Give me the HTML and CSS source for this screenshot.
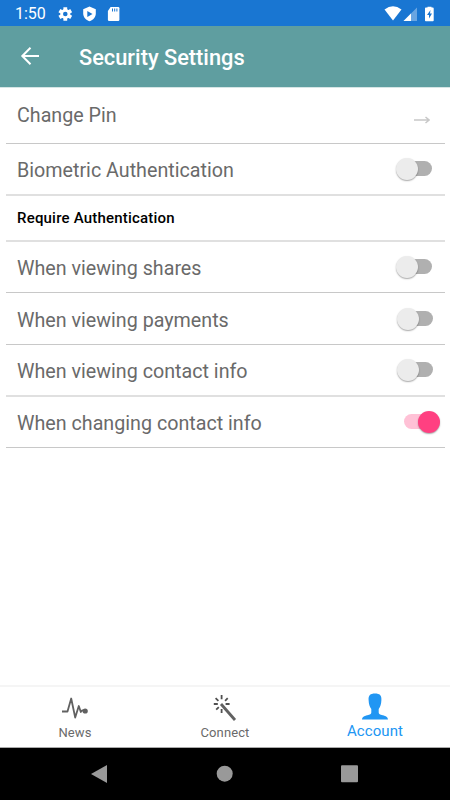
FILE: index.html
```
<!DOCTYPE html>
<html lang="en">
<head>
    <meta charset="UTF-8">
    <meta name="viewport" content="width=device-width, initial-scale=1.0">
    <title>Security Settings</title>
    <link rel="stylesheet" href="styles.css">
</head>
<body>
    <div class="status-bar">
        <span class="time">1:50</span>
        <svg class="status-left" width="64" height="16" viewBox="0 0 64 16">
            <g fill="#fff">
                <circle cx="7.3" cy="8" r="5"/>
                <g stroke="#fff" stroke-width="3.8">
                    <path d="M7.3 1.2v13.6M1.4 4.6l11.8 6.8M13.2 4.6L1.4 11.4"/>
                </g>
                <path d="M31.5 .6l6.3 2.6v4.3c0 3.7-2.6 6.4-6.3 7.7-3.7-1.3-6.3-4-6.3-7.7V3.2z"/>
                <path d="M53.6 1h7.6q1.2 0 1.2 1.2v11.6q0 1.2-1.2 1.2h-9.1q-1.2 0-1.2-1.2V5z" transform="translate(-1 0)"/>
            </g>
            <circle cx="7.3" cy="8" r="2.3" fill="#1976d2"/>
            <path d="M29.3 4.9l5.2 3-5.2 3z" fill="#1976d2"/>
            <path d="M54.5 2.5v3M56.7 2.5v3M58.9 2.5v3" stroke="#1976d2" stroke-width="1"/>
        </svg>
        <svg class="status-right" width="52" height="16" viewBox="0 0 52 16">
            <path d="M.5 3.5Q9-2.8 17.5 3.5L9 14.5z" fill="#fff"/>
            <path d="M33 1.5V15H19.5z" fill="#fff" opacity=".35"/>
            <path d="M27 7.5V15H19.5z" fill="#fff"/>
            <path d="M43.5 1.6V.8h4v.8h1.4q.8 0 .8.8v12q0 .8-.8.8h-7.1q-.8 0-.8-.8v-12q0-.8.8-.8z" fill="#fff"/>
            <path d="M46.5 4L43 9h2v3.5l3-5h-2z" fill="#1976d2"/>
        </svg>
    </div>

    <div class="header">
        <svg class="back" width="20" height="20" viewBox="0 0 20 20" fill="none" stroke="#fff" stroke-width="2">
            <path d="M19 10H2.5M10.5 1.8L2.3 10l8.2 8.2"/>
        </svg>
        <h1>Security Settings</h1>
    </div>

    <div class="settings">
        <div class="row pin">
            <span>Change Pin</span>
            <svg class="arrow" width="16" height="8" viewBox="0 0 16 8" fill="none" stroke="#c8c8c8" stroke-width="1.5">
                <path d="M0 4h15M11.5 1L15 4l-3.5 3"/>
            </svg>
        </div>
        <div class="row soft">
            <span>Biometric Authentication</span>
            <div class="switch"></div>
        </div>
        <div class="row soft section"><span>Require Authentication</span></div>
        <div class="row shares">
            <span>When viewing shares</span>
            <div class="switch"></div>
        </div>
        <div class="row">
            <span>When viewing payments</span>
            <div class="switch inset"></div>
        </div>
        <div class="row soft">
            <span>When viewing contact info</span>
            <div class="switch inset"></div>
        </div>
        <div class="row">
            <span>When changing contact info</span>
            <div class="switch on"></div>
        </div>
    </div>

    <div class="tabs">
        <div class="tab">
            <svg width="28" height="28" viewBox="0 0 28 28" fill="none" stroke="#616161" stroke-width="1.8" stroke-linejoin="round">
                <path d="M1 15.5h5.5l3.700-13 4 19L17.800 10l2 6 1.200-1.500h3"/>
                <circle cx="24.2" cy="15" r="2.6" fill="#616161" stroke="none"/>
            </svg>
            <span>News</span>
        </div>
        <div class="tab">
            <svg width="28" height="30" viewBox="0 0 28 30" fill="none" stroke="#505050">
                <path d="M10 10l14 16" stroke-width="2.8" stroke="#616161"/>
                <path d="M10.600 1v4.200M10.600 15v4M2.800 10h4M14.600 10h4M4.600 4.200l2.800 2.600M16.700 4.200l-2.600 2.600M5.200 15.700l2.600-2.600" stroke-width="1.8"/>
            </svg>
            <span>Connect</span>
        </div>
        <div class="tab active">
            <svg width="28" height="29" viewBox="0 0 28 29">
                <path d="M14 .6c4.800 0 6.700 2 6.400 6.500-.2 4.200-1 6.900-2.700 8.800v3.500c0 1.500 1.300 2 4 2.800 3.500 1 4.800 1.600 5.300 4.200H1c.5-2.600 1.800-3.200 5.300-4.200 2.700-.8 4-1.300 4-2.800v-3.500C8.600 14 7.800 11.300 7.600 7.100 7.300 2.600 9.200.6 14 .6z" fill="#2196f3"/>
            </svg>
            <span>Account</span>
        </div>
    </div>

    <div class="nav-bar">
        <svg width="18" height="20" viewBox="0 0 18 20"><path d="M1 10L17 1v18z" fill="#999"/></svg>
        <svg width="18" height="20" viewBox="0 0 18 20"><circle cx="9.7" cy="9.7" r="8" fill="#999"/></svg>
        <svg width="18" height="20" viewBox="0 0 18 20"><rect x="1" y="1.2" width="17" height="17" rx="1" fill="#999"/></svg>
    </div>
</body>
</html>
```

FILE: styles.css
```
* {
    box-sizing: border-box;
}
body {
    margin: 0;
    height: 800px;
    display: flex;
    flex-direction: column;
    background-color: #fff;
    font-family: Roboto, 'Liberation Sans', sans-serif;
    color: #6a6a6a;
    overflow: hidden;
}
svg {
    display: block;
    flex: none;
}
.status-bar {
    height: 26px;
    background-color: #1976d2;
    color: #fff;
    display: flex;
    align-items: center;
    padding: 1px 14px 0 15px;
}
.time {
    width: 43px;
    font-size: 16px;
    line-height: 24px;
}
.status-right {
    margin-left: auto;
}
.header {
    height: 62px;
    background-color: #5f9ea0;
    border-bottom: 1px solid #d5e5e5;
    display: flex;
    align-items: center;
    padding-left: 20px;
}
.back {
    margin-top: -1px;
}
.header h1 {
    margin: 1px 0 0 39px;
    color: #fff;
    font-size: 21.8px;
    font-weight: 500;
}
.settings {
    flex: 1;
    padding: 0 5px 0 6px;
}
.row {
    height: 52px;
    display: flex;
    align-items: center;
    justify-content: space-between;
    padding: 0 13px 0 11px;
    border-bottom: 1px solid #c8c8c8;
    font-size: 19.7px;
    line-height: 23px;
}
.row.soft {
    border-bottom: 2px solid #e0e0e0;
}
.row span {
    padding-top: 3px;
}
.row.pin {
    height: 56px;
}
.row.pin span {
    padding: 0 0 1px;
}
.row.shares, .row:last-child {
    height: 51px;
}
.row.section {
    height: 46px;
    font-size: 15px;
    font-weight: 500;
    line-height: 18px;
    letter-spacing: 0.2px;
    color: #000;
}
.row.section span {
    padding-top: 0;
}
.arrow {
    margin: 9px 2px 0 0;
}
.switch {
    position: relative;
    width: 29px;
    height: 15px;
    border-radius: 8px;
    background-color: #b0b0b0;
    margin-top: -1px;
}
.switch.inset {
    margin-right: -1px;
}
.switch::after {
    content: "";
    position: absolute;
    left: -7px;
    top: -3px;
    width: 22px;
    height: 22px;
    border-radius: 50%;
    background-color: #ececec;
    box-shadow: 0 1px 1.5px rgba(0, 0, 0, 0.35);
}
.switch.on {
    background-color: #ffc1d6;
    margin-right: -1px;
}
.switch.on::after {
    left: 14px;
    background-color: #ff4081;
}
.tabs {
    height: 63px;
    border-top: 2px solid #f5f5f5;
    border-bottom: 1px solid #aaa;
    display: flex;
}
.tab {
    flex: 1;
    display: flex;
    flex-direction: column;
    align-items: center;
    justify-content: flex-end;
    padding-bottom: 5px;
    font-size: 13px;
    line-height: 18px;
    letter-spacing: 0.1px;
}
.tab.active {
    padding-bottom: 7px;
    color: #2196f3;
    font-size: 15px;
}
.nav-bar {
    height: 52px;
    background-color: #000;
    display: flex;
    justify-content: space-between;
    align-items: center;
    padding: 0 92px 0 90px;
}
```
